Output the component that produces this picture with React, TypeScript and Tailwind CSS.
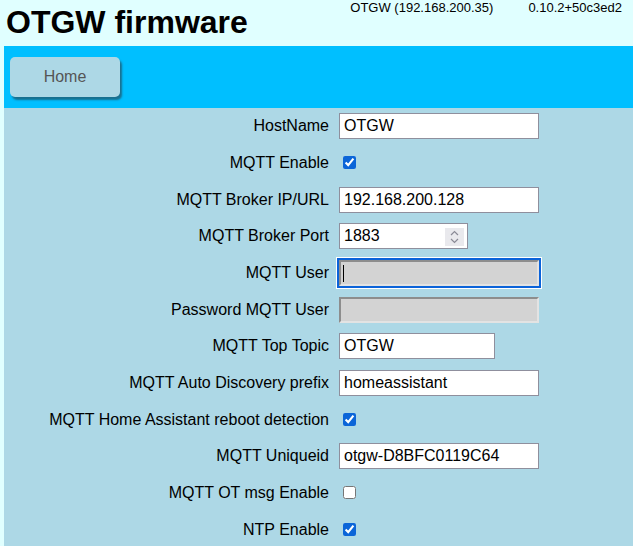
import { ReactNode } from 'react';

type Row =
  | { label: string; kind: 'text'; value: string; width: string }
  | { label: string; kind: 'check'; checked: boolean }
  | { label: string; kind: 'port'; value: string }
  | { label: string; kind: 'locked'; focused?: boolean };

const ROWS: Row[] = [
  { label: 'HostName', kind: 'text', value: 'OTGW', width: 'w-[200px]' },
  { label: 'MQTT Enable', kind: 'check', checked: true },
  { label: 'MQTT Broker IP/URL', kind: 'text', value: '192.168.200.128', width: 'w-[200px]' },
  { label: 'MQTT Broker Port', kind: 'port', value: '1883' },
  { label: 'MQTT User', kind: 'locked', focused: true },
  { label: 'Password MQTT User', kind: 'locked' },
  { label: 'MQTT Top Topic', kind: 'text', value: 'OTGW', width: 'w-[156px]' },
  { label: 'MQTT Auto Discovery prefix', kind: 'text', value: 'homeassistant', width: 'w-[200px]' },
  { label: 'MQTT Home Assistant reboot detection', kind: 'check', checked: true },
  { label: 'MQTT Uniqueid', kind: 'text', value: 'otgw-D8BFC0119C64', width: 'w-[200px]' },
  { label: 'MQTT OT msg Enable', kind: 'check', checked: false },
  { label: 'NTP Enable', kind: 'check', checked: true },
];

const inputBase =
  'h-[26px] border border-[#8f8f9d] bg-white px-[4px] text-[16px] text-black outline-none';

function Field({ row }: { row: Row }): ReactNode {
  switch (row.kind) {
    case 'text':
      return <input type="text" defaultValue={row.value} className={`${inputBase} ${row.width}`} />;
    case 'check':
      return (
        <input
          type="checkbox"
          defaultChecked={row.checked}
          className="ml-[4px] h-[13px] w-[13px] accent-[#0b65d8]"
        />
      );
    case 'port':
      return (
        <div className="relative w-[129px]">
          <input type="text" defaultValue={row.value} className={`${inputBase} w-full`} />
          {/* spin buttons */}
          <div className="absolute right-[4px] top-[5px] flex h-[18px] w-[19px] items-center justify-center bg-[#e9e9ed]">
            <svg width="9" height="14" viewBox="0 0 9 14" fill="none" stroke="#8a8a96" strokeWidth="1.2">
              <path d="M1 5l3.5-3.5L8 5M1 9l3.5 3.5L8 9" />
            </svg>
          </div>
        </div>
      );
    case 'locked':
      return (
        <div className="relative w-[200px]">
          <input
            type="text"
            disabled
            className={`h-[26px] w-full border-2 border-t-[#8d8d8d] border-l-[#8d8d8d] border-b-[#e3e3e3] border-r-[#e3e3e3] bg-[#d3d3d3] px-[3px] text-[16px] ${
              row.focused ? 'outline-2 outline-[#0b63d9] shadow-[0_0_0_3px_white]' : 'outline-none'
            }`}
          />
          {row.focused && <span className="absolute left-[4px] top-[5px] h-[17px] w-px bg-black" />}
        </div>
      );
  }
}

export default function App() {
  return (
    <div className="min-h-screen bg-[#e0ffff] font-['Liberation_Sans',Arial,sans-serif] text-black">
      <header className="flex h-[46px] items-start justify-between pl-[6px] pr-[11px]">
        <h1 className="pt-[6px] text-[32px] font-bold leading-none">OTGW firmware</h1>
        <div className="flex gap-[35px] pt-[1px] text-[13px] leading-none">
          <span>OTGW (192.168.200.35)</span>
          <span>0.10.2+50c3ed2</span>
        </div>
      </header>

      <div className="ml-[4px]">
        <nav className="flex h-[62px] items-center bg-[#00bfff] px-[6px]">
          <button className="h-[40px] w-[110px] rounded-[5px] bg-[#add8e6] text-[16px] text-[#555] shadow-[2px_3px_2px_rgba(40,60,70,0.6)]">
            Home
          </button>
        </nav>

        <main className="grid grid-cols-[325px_1fr] auto-rows-[36.67px] items-center gap-x-[10px] bg-[#add8e6] pb-2 text-[16px]">
          {ROWS.map((row) => (
            <div key={row.label} className="contents">
              <label className="text-right">{row.label}</label>
              <div className="flex items-center">
                <Field row={row} />
              </div>
            </div>
          ))}
        </main>
      </div>
    </div>
  );
}
